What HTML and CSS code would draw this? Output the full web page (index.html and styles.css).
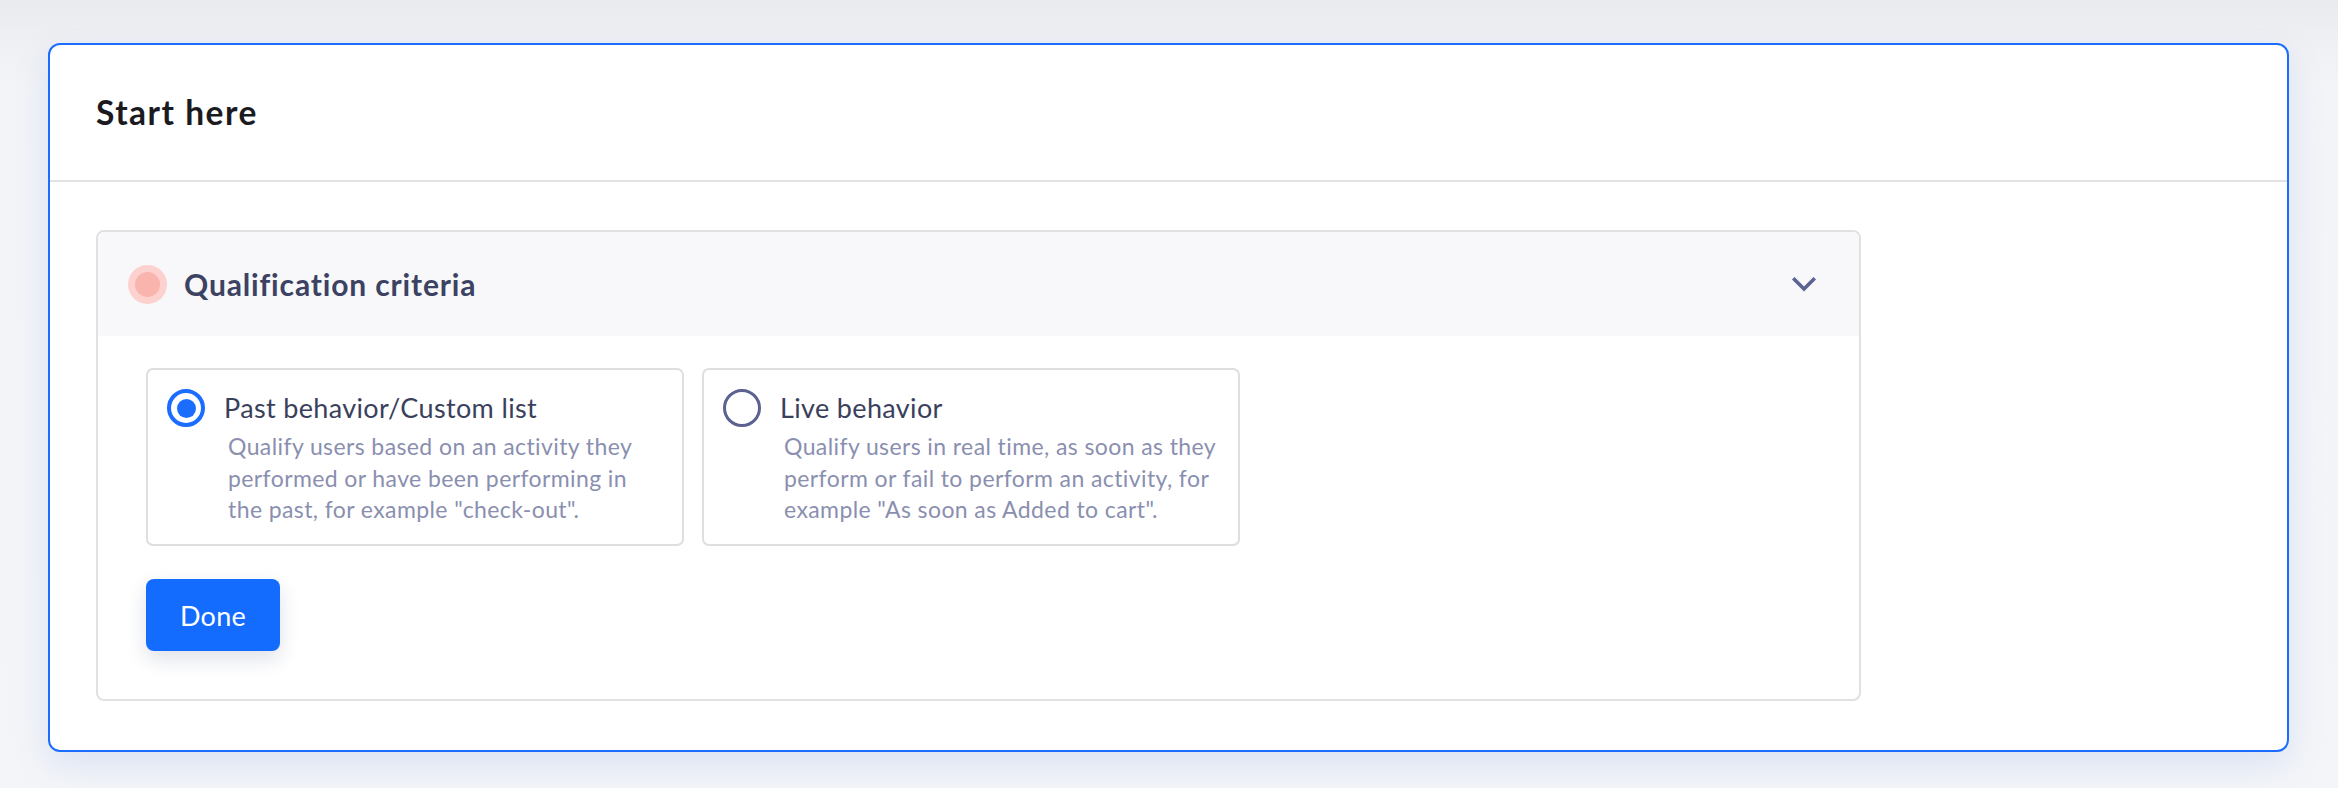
FILE: index.html
```html
<!DOCTYPE html>
<html lang="en">
<head>
<meta charset="utf-8">
<title>Start here</title>
<link rel="stylesheet" href="styles.css">
</head>
<body>
  <section class="card">
    <header class="card-header">
      <h1 class="card-title">Start here</h1>
    </header>
    <div class="card-body">
      <div class="panel">
        <div class="panel-header">
          <span class="status-dot"><span class="status-dot-inner"></span></span>
          <h2 class="panel-title">Qualification criteria</h2>
          <svg class="chevron" viewBox="0 0 24 16" width="24" height="16" aria-hidden="true">
            <path d="M2.5 2.5 L12 12 L21.5 2.5" fill="none" stroke="#5c6390" stroke-width="3.6" stroke-linecap="square" stroke-linejoin="miter"/>
          </svg>
        </div>
        <div class="panel-body">
          <div class="options">
            <label class="option">
              <span class="radio radio-checked"><span class="radio-dot"></span></span>
              <span class="option-title">Past behavior/Custom list</span>
              <span class="option-desc">Qualify users based on an activity they performed or have been performing in the past, for example "check-out".</span>
            </label>
            <label class="option">
              <span class="radio"></span>
              <span class="option-title">Live behavior</span>
              <span class="option-desc">Qualify users in real time, as soon as they perform or fail to perform an activity, for example "As soon as Added to cart".</span>
            </label>
          </div>
          <button class="btn-primary" type="button">Done</button>
        </div>
      </div>
    </div>
  </section>
</body>
</html>
```

FILE: styles.css
```css
* {
  box-sizing: border-box;
}

html,
body {
  margin: 0;
  height: 100%;
}

body {
  font-family: "Lato", "Liberation Sans", sans-serif;
  background: linear-gradient(#e9eaed 0px, #eff0f3 40px, #f3f4f7 90px, #f4f5f8 100%);
  padding: 43px 49px 0 48px;
}

.card {
  background: #ffffff;
  border: 2px solid #1a6dff;
  border-radius: 12px;
  box-shadow: 0 12px 36px rgba(40, 100, 220, 0.13);
}

.card-header {
  height: 137px;
  display: flex;
  align-items: center;
  padding-left: 46px;
  border-bottom: 2px solid #e3e3e6;
}

.card-title {
  margin: 0;
  font-size: 33.5px;
  font-weight: 700;
  color: #1b1b1f;
  letter-spacing: 1.5px;
  margin-top: -2px;
}

.card-body {
  padding: 48px 46px 49px;
}

.panel {
  width: 1765px;
  border: 2px solid #e1e1e3;
  border-radius: 8px;
  overflow: hidden;
}

.panel-header {
  height: 104px;
  background: #f8f8fa;
  display: flex;
  align-items: center;
  padding: 0 43px 0 30px;
}

.status-dot {
  width: 39px;
  height: 39px;
  border-radius: 50%;
  background: #fcd1ce;
  display: flex;
  align-items: center;
  justify-content: center;
  flex: none;
}

.status-dot-inner {
  width: 25px;
  height: 25px;
  border-radius: 50%;
  background: #f9b4ae;
}

.panel-title {
  margin: 0 0 0 17px;
  font-size: 30px;
  font-weight: 700;
  color: #3c4262;
  letter-spacing: 0.85px;
  flex: 1;
}

.chevron {
  flex: none;
  width: 24px;
  height: 16px;
  margin-top: 2px;
}

.panel-body {
  padding: 32px 48px 48px;
}

.options {
  display: flex;
  gap: 18px;
}

.option {
  width: 538px;
  height: 178px;
  border: 2px solid #dedee0;
  border-radius: 7px;
  padding: 19px 20px 0 19px;
  display: grid;
  grid-template-columns: 38px 1fr;
  column-gap: 19px;
  align-content: start;
}

.radio {
  width: 38px;
  height: 38px;
  border-radius: 50%;
  border: 3.5px solid #5b6190;
  display: flex;
  align-items: center;
  justify-content: center;
}

.radio-checked {
  border: 4px solid #1a6dff;
}

.radio-dot {
  width: 19px;
  height: 19px;
  border-radius: 50%;
  background: #1a6dff;
}

.option-title {
  align-self: center;
  font-size: 27px;
  line-height: 38px;
  letter-spacing: 0.35px;
  color: #3a3f5c;
}

.option-desc {
  grid-column: 2;
  margin-left: 4px;
  margin-top: 4px;
  font-size: 23px;
  line-height: 31.5px;
  letter-spacing: 0.4px;
  color: #8a8fb0;
}

.btn-primary {
  margin-top: 33px;
  width: 134px;
  height: 72px;
  border: none;
  border-radius: 8px;
  background: #146cff;
  color: #ffffff;
  font-family: "Lato", "Liberation Sans", sans-serif;
  font-size: 27px;
  letter-spacing: 0.3px;
  box-shadow: 0 8px 20px rgba(20, 40, 90, 0.14);
  cursor: pointer;
}
```
